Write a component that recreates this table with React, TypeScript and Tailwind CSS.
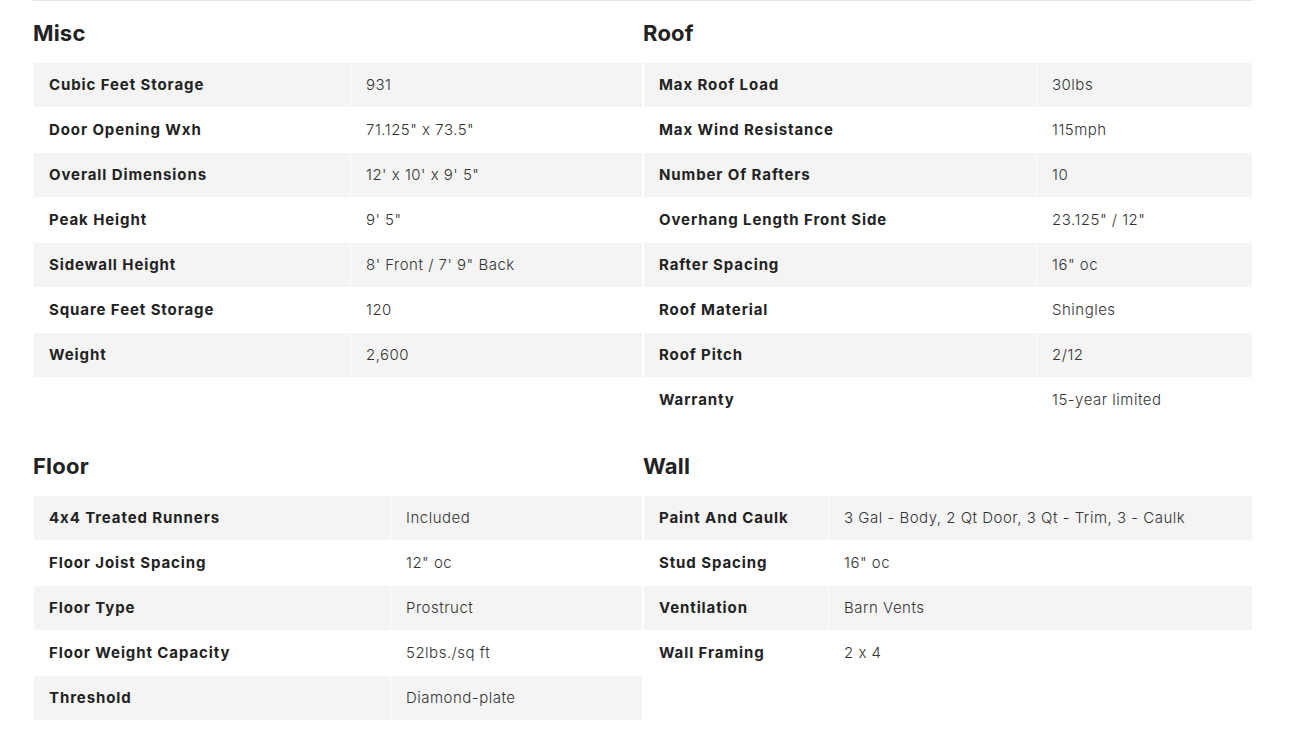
type Row = [string, string];

type Section = {
  title: string;
  labelWidth: string;
  rows: Row[];
};

const sections: Section[] = [
  {
    title: "Misc",
    labelWidth: "w-[316px]",
    rows: [
      ["Cubic Feet Storage", "931"],
      ["Door Opening Wxh", '71.125" x 73.5"'],
      ["Overall Dimensions", "12' x 10' x 9' 5\""],
      ["Peak Height", "9' 5\""],
      ["Sidewall Height", "8' Front / 7' 9\" Back"],
      ["Square Feet Storage", "120"],
      ["Weight", "2,600"],
    ],
  },
  {
    title: "Roof",
    labelWidth: "w-[392px]",
    rows: [
      ["Max Roof Load", "30lbs"],
      ["Max Wind Resistance", "115mph"],
      ["Number Of Rafters", "10"],
      ["Overhang Length Front Side", '23.125" / 12"'],
      ["Rafter Spacing", '16" oc'],
      ["Roof Material", "Shingles"],
      ["Roof Pitch", "2/12"],
      ["Warranty", "15-year limited"],
    ],
  },
  {
    title: "Floor",
    labelWidth: "w-[356px]",
    rows: [
      ["4x4 Treated Runners", "Included"],
      ["Floor Joist Spacing", '12" oc'],
      ["Floor Type", "Prostruct"],
      ["Floor Weight Capacity", "52lbs./sq ft"],
      ["Threshold", "Diamond-plate"],
    ],
  },
  {
    title: "Wall",
    labelWidth: "w-[184px]",
    rows: [
      ["Paint And Caulk", "3 Gal - Body, 2 Qt Door, 3 Qt - Trim, 3 - Caulk"],
      ["Stud Spacing", '16" oc'],
      ["Ventilation", "Barn Vents"],
      ["Wall Framing", "2 x 4"],
    ],
  },
];

function SpecTable({ section }: { section: Section }) {
  return (
    <div>
      <h3 className="h-[29px] mb-[14px] text-[22px] leading-[29px] font-bold text-[#222] tracking-[0.2px]">
        {section.title}
      </h3>
      <table className="w-full table-fixed border-separate border-spacing-[1px] text-[15px]">
        <tbody>
          {section.rows.map(([label, value], i) => (
            <tr key={label} className={i % 2 === 0 ? "bg-[#f4f4f4]" : ""}>
              <td
                className={`${section.labelWidth} h-[44px] px-[15px] align-middle font-bold text-[#222] tracking-[0.9px]`}
              >
                {label}
              </td>
              <td className="h-[44px] px-[15px] align-middle font-light text-[#333] tracking-[0.5px]">
                {value}
              </td>
            </tr>
          ))}
        </tbody>
      </table>
    </div>
  );
}

export default function App() {
  return (
    <div className="min-h-[737px] bg-white px-[33px] font-['Inter',sans-serif]">
      <div className="w-[1220px] border-t border-[#e6e6df] pt-[18px]">
        <div className="grid grid-cols-2 gap-y-[29px]">
          {sections.map((s) => (
            <SpecTable key={s.title} section={s} />
          ))}
        </div>
      </div>
    </div>
  );
}
